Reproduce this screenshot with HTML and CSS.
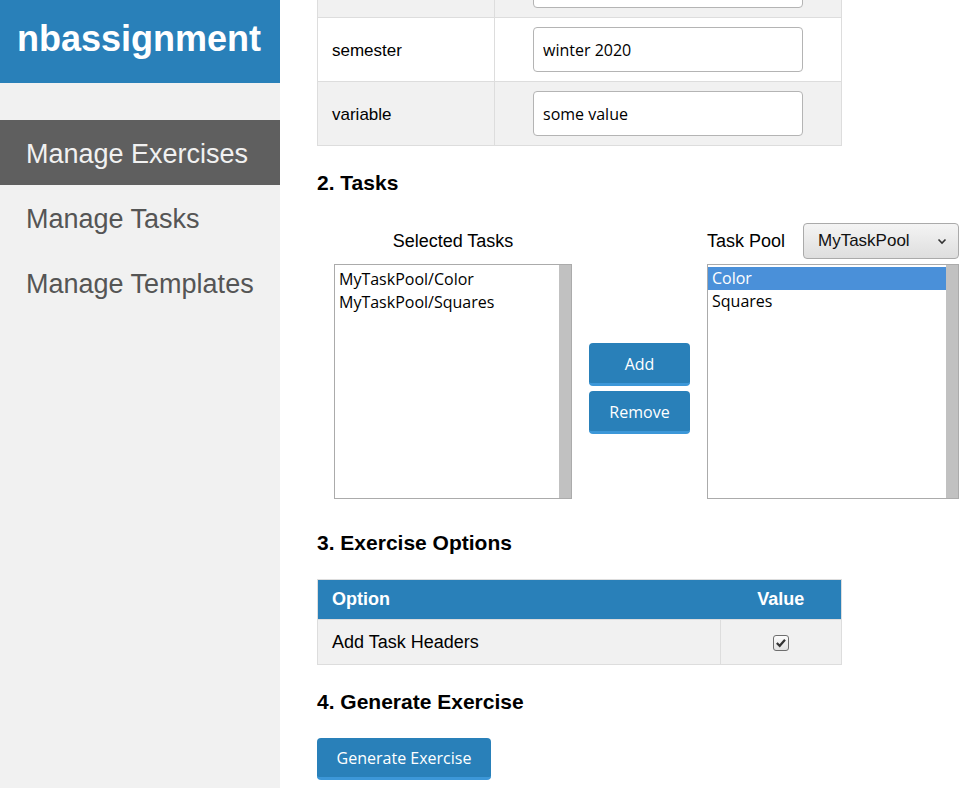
FILE: index.html
```html
<!DOCTYPE html>
<html>
<head>
<meta charset="utf-8">
<title>nbassignment</title>
<link rel="stylesheet" href="styles.css">
</head>
<body>
<div class="layout">
  <aside class="sidebar">
    <div class="brand">nbassignment</div>
    <nav class="nav">
      <a class="nav-item active">Manage Exercises</a>
      <a class="nav-item">Manage Tasks</a>
      <a class="nav-item">Manage Templates</a>
    </nav>
  </aside>
  <main class="main">
    <div class="content">
      <table class="info-table">
        <tr class="row-alt"><td class="key"></td><td class="val"><input class="text-input" value=""></td></tr>
        <tr><td class="key">semester</td><td class="val"><input class="text-input" value="winter 2020"></td></tr>
        <tr class="row-alt"><td class="key">variable</td><td class="val"><input class="text-input" value="some value"></td></tr>
      </table>

      <h2 class="section-title tasks-title">2. Tasks</h2>
      <div class="tasks">
        <div class="task-col left-col">
          <div class="col-head center">Selected Tasks</div>
          <div class="listbox left-list">
            <div class="list-items">
              <div class="opt">MyTaskPool/Color</div>
              <div class="opt">MyTaskPool/Squares</div>
            </div>
            <div class="sbar"></div>
          </div>
        </div>
        <div class="task-col btn-col">
          <button class="btn btn-small">Add</button>
          <button class="btn btn-small">Remove</button>
        </div>
        <div class="task-col right-col">
          <div class="col-head pool-head">
            <span class="pool-label">Task Pool</span>
            <div class="dropdown">
              <span>MyTaskPool</span>
              <svg class="chev" width="10" height="7" viewBox="0 0 10 7"><path d="M1.5 1.5 L5 5 L8.5 1.5" fill="none" stroke="#333" stroke-width="1.6"/></svg>
            </div>
          </div>
          <div class="listbox right-list">
            <div class="list-items">
              <div class="opt selected">Color</div>
              <div class="opt">Squares</div>
            </div>
            <div class="sbar"></div>
          </div>
        </div>
      </div>

      <h2 class="section-title opts-title">3. Exercise Options</h2>
      <table class="opt-table">
        <tr class="opt-head"><th class="opt-name">Option</th><th class="opt-val">Value</th></tr>
        <tr class="row-alt"><td class="opt-name">Add Task Headers</td><td class="opt-val">
          <svg class="check" width="16" height="16" viewBox="0 0 16 16"><defs><linearGradient id="cg" x1="0" y1="0" x2="0" y2="1"><stop offset="0" stop-color="#fdfdfd"/><stop offset="1" stop-color="#e0e0e0"/></linearGradient></defs><rect x="0.5" y="0.5" width="15" height="15" rx="2.5" fill="url(#cg)" stroke="#6e6e6e"/><path d="M3.8 8 L6.7 10.8 L12 4.8" fill="none" stroke="#333" stroke-width="2.2"/></svg>
        </td></tr>
      </table>

      <h2 class="section-title gen-title">4. Generate Exercise</h2>
      <button class="btn btn-gen">Generate Exercise</button>
    </div>
  </main>
</div>
</body>
</html>
```

FILE: styles.css
```css
html, body {
  margin: 0;
  padding: 0;
  background: #ffffff;
}
body {
  font-family: "Liberation Sans", Arial, sans-serif;
  color: #000;
}
.layout {
  display: flex;
  height: 788px;
  overflow: hidden;
}
.sidebar {
  width: 280px;
  flex: 0 0 280px;
  background: #f1f1f1;
  height: 788px;
}
.brand {
  background: #2980b9;
  color: #fff;
  font-weight: bold;
  font-size: 36px;
  height: 83px;
  line-height: 78px;
  padding-left: 17px;
  box-sizing: border-box;
}
.nav {
  margin-top: 37px;
  display: flex;
  flex-direction: column;
}
.nav-item {
  display: block;
  height: 65px;
  box-sizing: border-box;
  padding-top: 4px;
  line-height: 61px;
  padding-left: 26px;
  font-size: 27px;
  color: #555;
}
.nav-item.active {
  background: #5f5f5f;
  color: #f1f1f1;
}
.main {
  flex: 1;
  height: 788px;
  overflow: hidden;
}
.content {
  margin-top: -47px;
  padding-left: 37px;
}
.info-table, .opt-table {
  border-collapse: collapse;
  width: 525px;
  border: 1px solid #ddd;
}
.info-table td {
  border: 1px solid #ddd;
  height: 64px;
  padding: 0;
  font-size: 17px;
  box-sizing: border-box;
}
.info-table .key {
  width: 177px;
  padding-left: 14px;
  padding-top: 2px;
}
.info-table .val {
  text-align: center;
}
.row-alt {
  background: #f1f1f1;
}
.text-input {
  width: 270px;
  height: 45px;
  box-sizing: border-box;
  border: 1px solid #b4b4b4;
  border-radius: 4px;
  font-family: "Open Sans", sans-serif;
  font-size: 16px;
  padding: 0 9px;
  color: #000;
  background: #fff;
  display: block;
  margin: 0 auto;
}
.section-title {
  font-size: 21px;
  font-weight: bold;
  line-height: 24px;
  margin: 0;
}
.tasks-title { margin-top: 25px; }
.tasks {
  display: flex;
  gap: 17px;
  padding: 0 17px;
  margin-top: 28px;
}
.task-col {
  display: flex;
  flex-direction: column;
}
.left-col { width: 238px; }
.right-col { width: 252px; }
.btn-col {
  width: 101px;
  padding-top: 120px;
  gap: 5px;
}
.col-head {
  height: 36px;
  margin-bottom: 5px;
  font-size: 18px;
  display: flex;
  align-items: center;
}
.col-head.center {
  justify-content: center;
}
.pool-head {
  justify-content: space-between;
}
.dropdown {
  width: 156px;
  height: 36px;
  box-sizing: border-box;
  border: 1px solid #aaa;
  border-radius: 4px;
  background: linear-gradient(#f4f4f4, #dedede);
  display: flex;
  align-items: center;
  justify-content: space-between;
  padding: 0 11px 0 14px;
  font-size: 17px;
  color: #111;
}
.listbox {
  height: 235px;
  box-sizing: border-box;
  border: 1px solid #ababab;
  display: flex;
  background: #fff;
}
.list-items {
  flex: 1;
  padding-top: 2px;
}
.left-list .list-items {
  padding-top: 3px;
}
.sbar {
  width: 12px;
  background: #c1c1c1;
}
.opt {
  font-family: "Open Sans", sans-serif;
  font-size: 16px;
  height: 23px;
  line-height: 23px;
  padding-left: 4px;
  color: #000;
}
.opt.selected {
  background: #4a90d9;
  color: #fff;
}
.btn {
  font-family: "Open Sans", sans-serif;
  font-size: 16px;
  color: #fff;
  background: #2980b9;
  border: none;
  border-bottom: 3px solid #3c97d8;
  border-radius: 4px;
  box-sizing: border-box;
  padding: 0;
  cursor: pointer;
}
.btn-small {
  width: 101px;
  height: 43px;
  padding-top: 1px;
}
.opts-title { margin-top: 32px; }
.opt-table {
  margin-top: 24px;
}
.opt-table th {
  background: #2980b9;
  color: #fff;
  font-size: 18px;
  font-weight: bold;
  height: 39px;
  padding: 0;
}
.opt-table td {
  height: 44px;
  font-size: 18px;
  padding: 0;
  border-top: 1px solid #ddd;
}
.opt-table .opt-name {
  text-align: left;
  padding-left: 14px;
}
.opt-table .opt-val {
  width: 120px;
  text-align: center;
  border-left: 1px solid #ddd;
}
.opt-table th.opt-val {
  border-left: none;
}
.check {
  display: inline-block;
  vertical-align: middle;
}
.gen-title { margin-top: 25px; }
.btn-gen {
  margin-top: 24px;
  width: 174px;
  height: 42px;
  display: block;
}
```
